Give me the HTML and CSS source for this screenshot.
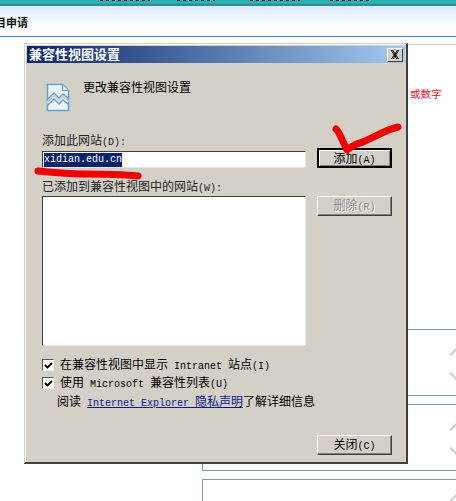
FILE: index.html
```html
<!DOCTYPE html>
<html lang="zh">
<head>
<meta charset="utf-8">
<title>兼容性视图设置</title>
<link rel="stylesheet" href="styles.css">
</head>
<body>
<div class="page">
  <div class="teal">
    <span class="mark mark-a"></span>
    <span class="mark mark-b"></span>
    <span class="mark mark-c"></span>
    <span class="mark mark-d"></span>
  </div>
  <div class="subhead"><span class="subhead-text">目申请</span></div>
  <div class="content">
    <div class="rule"></div>
    <div class="hint">或数字</div>
    <div class="panel panel-a"><span class="chev"></span></div>
    <div class="panel panel-b"><span class="chev"></span></div>
    <div class="panel panel-c"><span class="chev"></span></div>
  </div>
</div>

<section class="dialog">
  <header class="titlebar">
    <span class="title">兼容性视图设置</span>
    <span class="close-x">
      <svg width="10" height="9" viewBox="0 0 10 9"><path d="M1 0l6 9M2.500 0l6 9M7.500 0l-6 9M9 0l-6 9" stroke="#000" stroke-width="1" fill="none"/></svg>
    </span>
  </header>
  <div class="body">
    <div class="intro">
      <svg class="doc" width="26" height="32" viewBox="0 0 26 32">
        <path d="M2.500 3.500h15l6 6v20h-21z" fill="#eef5fa" stroke="#5ba6d0" stroke-width="1.600"/>
        <path d="M17.500 3.500v6h6" fill="#cfe6f3" stroke="#5ba6d0" stroke-width="1.200"/>
        <path d="M2 20l7-7 5 5 4-4 6 5v2l-6-4-4 4-5-5-7 7z" fill="#d4d0c8"/>
        <path d="M2 19l7-7 5 5 4-4 6 5M2 25l7-7 5 5 4-4 6 5" fill="none" stroke="#5ba6d0" stroke-width="1.400"/>
      </svg>
      <span class="intro-text">更改兼容性视图设置</span>
    </div>

    <div class="label-add">添加此网站<span class="mono">(D):</span></div>
    <div class="row-add">
      <div class="input"><span class="selected">xidian.edu.cn</span></div>
      <button class="btn btn-default">添加<span class="mono">(A)</span></button>
    </div>

    <div class="label-list">已添加到兼容性视图中的网站<span class="mono">(W):</span></div>
    <div class="row-list">
      <div class="listbox"></div>
      <button class="btn btn-disabled">删除<span class="mono">(R)</span></button>
    </div>

    <label class="check check-first"><span class="box"><svg width="9" height="9" viewBox="0 0 9 9"><path d="M1 4l2.500 2.500L8 2" fill="none" stroke="#000" stroke-width="1.800"/></svg></span><span class="check-text">在兼容性视图中显示<span class="mono"> Intranet </span>站点<span class="mono">(I)</span></span></label>
    <label class="check"><span class="box"><svg width="9" height="9" viewBox="0 0 9 9"><path d="M1 4l2.500 2.500L8 2" fill="none" stroke="#000" stroke-width="1.800"/></svg></span><span class="check-text">使用<span class="mono"> Microsoft </span>兼容性列表<span class="mono">(U)</span></span></label>
    <div class="read">阅读<span class="mono"> </span><a class="link" href="#"><span class="mono">Internet Explorer </span>隐私声明</a>了解详细信息</div>

    <div class="footer"><button class="btn">关闭<span class="mono">(C)</span></button></div>
  </div>
</section>

<svg class="scribble" width="456" height="501" viewBox="0 0 456 501">
  <path d="M38 171c20 2 30 3 45 3 20 0 35 0 55 2" fill="none" stroke="#f00000" stroke-width="7" stroke-linecap="round"/>
  <path d="M336 129c3 2 7 13 11 21 4-3 8-6 13-7 12-4 24-13 38-16" fill="none" stroke="#f00000" stroke-width="7" stroke-linecap="round" stroke-linejoin="round"/>
</svg>
</body>
</html>
```

FILE: styles.css
```css
* { box-sizing: border-box; }
html, body { margin: 0; padding: 0; }
html { overflow: hidden; }
body {
  width: 456px; height: 501px; overflow: hidden; background: #fff; position: relative;
  font-family: "Noto Sans CJK SC", sans-serif; font-size: 12px; color: #000;
}
.page { width: 456px; height: 501px; overflow: hidden; }
.teal { display: flex; height: 5px; background: #2eb0ae; border-bottom: 1px solid #1c8f94; }
.mark { display: block; height: 1px; background: repeating-linear-gradient(90deg, #222 0 3px, transparent 3px 6px); }
.mark-a { width: 50px; margin-left: 100px; }
.mark-b { width: 38px; margin-left: 27px; }
.mark-c { width: 50px; margin-left: 35px; }
.mark-d { width: 40px; margin-left: 30px; }
.subhead {
  height: 32px; padding: 9px 0 0 0; border-top: 1px solid #3a88b0; border-bottom: 1px solid #3a80aa;
  background: linear-gradient(#dcebfa, #f5f9fd 50%, #ffffff 70%);
  overflow: hidden;
}
.subhead-text { display: block; margin-left: -5px; font-weight: 700; font-size: 11px; line-height: 14px; color: #111; }
.content { position: relative; padding: 7px 0 0 202px; }
.rule { height: 1px; background: #cfcfc8; }
.hint { height: 0; padding-left: 208px; margin-top: 43px; font-size: 10.5px; line-height: 12px; color: #f01030; }
.panel { position: relative; width: 254px; border: 1px solid #7f9db0; border-right: 0; }
.panel-a { margin-top: 241px; height: 67px; }
.panel-b { margin-top: 8px; height: 67px; }
.panel-c { margin-top: 8px; height: 22px; border-bottom: 0; overflow: hidden; }
.chev { position: absolute; right: 0; top: 21px; width: 7px; height: 24px; }
.panel-c .chev { top: 17px; }
.chev::before, .chev::after { content: ""; position: absolute; left: 0; width: 9px; height: 2px; background: #ccc; }
.chev::before { top: 0; transform: rotate(-45deg); }
.chev::after { top: 24px; transform: rotate(45deg); }

.dialog {
  position: absolute; left: 24px; top: 43px; width: 384px; height: 421px;
  background: #d4d0c8; border-top: 1px solid #d4d0c8; border-left: 1px solid #d4d0c8;
  border-right: 2px solid #404040; border-bottom: 2px solid #404040;
  box-shadow: inset 1px 1px 0 #fff, inset 2px 2px 0 #d4d0c8;
  padding: 2px 1px 0 2px;
}
.titlebar {
  height: 17px; display: flex; align-items: center; justify-content: space-between;
  padding: 0 2px 0 2px;
  background: linear-gradient(90deg, #0a246a, #a6caf0);
}
.title { color: #fff; font-weight: 700; font-size: 13px; line-height: 15px; margin-top: -2px; }
.close-x {
  width: 16px; height: 14px; background: #d4d0c8; display: flex; align-items: center; justify-content: center;
  border: 1px solid; border-color: #fff #404040 #404040 #fff;
}
.body { padding: 0 13px 0 15px; }
.mono { font-family: "Liberation Mono", monospace; font-size: 10px; white-space: pre; }
.intro { display: flex; align-items: flex-start; height: 60px; padding: 18px 0 0 3px; }
.doc { display: block; }
.intro-text { margin: -3px 0 0 12px; line-height: 17px; }
.label-add { height: 17px; margin-top: 8px; line-height: 17px; color: #222; }
.row-add { display: flex; justify-content: space-between; align-items: flex-start; height: 20px; }
.input {
  width: 264px; height: 17px; margin-top: 3px; background: #fff; padding: 1px 0 0 1px;
  border: 1px solid; border-color: #404040 #e8e6e0 #e8e6e0 #404040;
  font-family: "Liberation Mono", monospace; font-size: 10px; line-height: 14px;
}
.selected { display: inline-block; background: #0a246a; color: #fff; height: 14px; }
.btn {
  width: 75px; height: 20px; padding: 0 0 2px; background: #d4d0c8; color: #000;
  font-family: inherit; font-size: 12px; line-height: 16px;
  border: 1px solid; border-color: #fff #404040 #404040 #fff;
  box-shadow: inset -1px -1px 0 #808080;
}
.btn-default { border: 2px solid #000; box-shadow: inset 1px 1px 0 #fff, inset -1px -1px 0 #808080; }
.btn-disabled { color: #8a8a88; text-shadow: 1px 1px 0 #fff; }
.label-list { height: 17px; margin-top: 9px; line-height: 17px; color: #222; }
.row-list { display: flex; justify-content: space-between; align-items: flex-start; height: 150px; margin-top: 2px; }
.listbox {
  width: 264px; height: 150px; background: #fff;
  border: 1px solid; border-color: #404040 #e8e6e0 #e8e6e0 #404040;
}
.check { display: flex; align-items: center; height: 18px; gap: 6px; }
.check-first { margin-top: 10px; }
.check-text { line-height: 18px; white-space: pre; }
.box {
  width: 12px; height: 12px; background: #fff; display: flex; align-items: center; justify-content: center;
  border: 1px solid; border-color: #555 #eee #eee #555;
}
.read { padding-left: 15px; line-height: 17px; white-space: pre; }
.link { color: #0a1a8a; text-decoration: underline; }
.footer { display: flex; justify-content: flex-end; margin-top: 23px; }
.scribble { position: absolute; left: 0; top: 0; pointer-events: none; }
```
